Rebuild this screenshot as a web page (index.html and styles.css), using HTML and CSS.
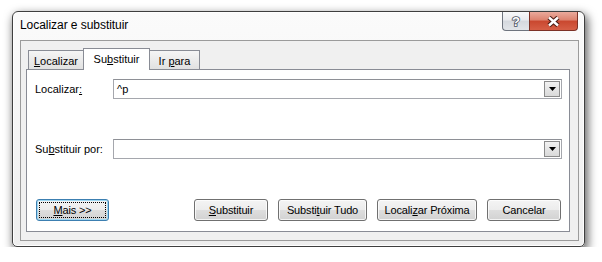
FILE: index.html
```html
<!DOCTYPE html>
<html lang="pt">
<head>
  <meta charset="UTF-8">
  <title>Localizar e substituir</title>
  <link rel="stylesheet" href="styles.css">
</head>
<body>

  <div class="window">
    <div class="titlebar">
      <span class="title">Localizar e substituir</span>
      <div class="caption-buttons">
        <div class="cap-btn help">
          <svg width="12" height="14" viewBox="0 0 12 14">
            <text x="6" y="12" text-anchor="middle" font-family="Liberation Sans, sans-serif" font-weight="bold" font-size="13" fill="#fff" stroke="#4a5261" stroke-width="1.6" paint-order="stroke">?</text>
          </svg>
        </div>
        <div class="cap-btn close">
          <svg width="15" height="11" viewBox="0 0 15 11">
            <path d="M3 1.5 L12 9.5 M12 1.5 L3 9.5" stroke="#4b1c14" stroke-width="4.6" fill="none"/>
            <path d="M3 1.5 L12 9.5 M12 1.5 L3 9.5" stroke="#fff" stroke-width="2.4" fill="none"/>
          </svg>
        </div>
      </div>
    </div>

    <div class="client">
      <div class="tabs">
        <div class="tab tab-find"><u>L</u>ocalizar</div>
        <div class="tab tab-replace active">Su<u>b</u>stituir</div>
        <div class="tab tab-goto">Ir <u>p</u>ara</div>
      </div>

      <div class="panel">
        <div class="field">
          <label>Localizar<u>:</u></label>
          <div class="combo">
            <span class="combo-text">^p</span>
            <span class="combo-arrow">
              <svg width="7" height="4" viewBox="0 0 7 4"><polygon points="0,0 7,0 3.5,4" fill="#000"/></svg>
            </span>
          </div>
        </div>

        <div class="field">
          <label>Su<u>b</u>stituir por:</label>
          <div class="combo">
            <span class="combo-text"></span>
            <span class="combo-arrow">
              <svg width="7" height="4" viewBox="0 0 7 4"><polygon points="0,0 7,0 3.5,4" fill="#000"/></svg>
            </span>
          </div>
        </div>

        <div class="buttons">
          <button class="btn btn-more"><span class="focus-rect"><u>M</u>ais &gt;&gt;</span></button>
          <div class="actions">
            <button class="btn btn-replace"><u>S</u>ubstituir</button>
            <button class="btn btn-replace-all">Substi<u>t</u>uir Tudo</button>
            <button class="btn btn-next">Locali<u>z</u>ar Próxima</button>
            <button class="btn btn-cancel">Cancelar</button>
          </div>
        </div>
      </div>
    </div>
  </div>

</body>
</html>
```

FILE: styles.css
```css
* {
  box-sizing: border-box;
}

body {
  margin: 0;
  padding: 11px 0 0 12px;
  background-color: #fff;
  font-family: "Liberation Sans", Arial, sans-serif;
  font-size: 11px;
  color: #000;
}

u {
  text-decoration: underline;
  text-underline-offset: 1px;
}

/* window frame */

.window {
  width: 573px;
  height: 236px;
  display: flex;
  flex-direction: column;
  border: 1px solid #3f3f3f;
  border-radius: 6px 6px 5px 5px;
  background: linear-gradient(#fbfbfb, #eeeeee);
  box-shadow: inset 0 0 0 1px rgba(255, 255, 255, 0.9), 2px 4px 10px 1px rgba(0, 0, 0, 0.6);
}

.titlebar {
  height: 28px;
  flex-shrink: 0;
  display: flex;
  justify-content: space-between;
  align-items: flex-start;
}

.title {
  padding: 6px 0 0 7px;
  font-size: 12px;
  line-height: 15px;
  letter-spacing: -0.05px;
}

.caption-buttons {
  display: flex;
  margin-right: 6px;
}

.cap-btn {
  height: 19px;
  display: flex;
  align-items: center;
  justify-content: center;
  border: 1px solid #6e747e;
  border-top: none;
}

.help {
  width: 27px;
  border-right: none;
  border-radius: 0 0 0 4px;
  background: linear-gradient(#f8f9fa 0%, #e8eaee 45%, #d4d8de 50%, #e2e5e9 100%);
}

.close {
  width: 49px;
  border-color: #7c3126;
  border-radius: 0 0 4px 0;
  background: linear-gradient(#eaaa9c 0%, #dd826e 45%, #c9472f 50%, #d65f46 100%);
}

/* client area */

.client {
  flex: 1;
  margin: 0 5px 5px 7px;
  border: 1px solid #9b9b9b;
  background-color: #f0f0f0;
  padding: 7px 8px 8px 5px;
  display: flex;
  flex-direction: column;
}

.tabs {
  height: 21px;
  flex-shrink: 0;
  display: flex;
  align-items: flex-end;
  padding-left: 2px;
}

.tab {
  height: 19px;
  margin-left: -1px;
  border: 1px solid #898c95;
  border-bottom: none;
  background: linear-gradient(#f5f5f5, #e1e1e1);
  text-align: center;
  padding-top: 3px;
  line-height: 15px;
}

.tab:first-child {
  margin-left: 0;
}

.tab.active {
  height: 22px;
  margin-bottom: -1px;
  position: relative;
  z-index: 1;
  background: #fff;
}

.tab-find {
  width: 56px;
}

.tab-replace {
  width: 67px;
}

.tab-goto {
  width: 51px;
}

.panel {
  flex: 1;
  border: 1px solid #898c95;
  background-color: #fff;
  padding: 9px 7px 10px 8px;
  display: flex;
  flex-direction: column;
}

.field {
  height: 20px;
  display: flex;
  align-items: center;
}

.field + .field {
  margin-top: 40px;
}

.field label {
  width: 78px;
  flex-shrink: 0;
}

.combo {
  flex: 1;
  height: 20px;
  border: 1px solid #a5a7ad;
  border-top-color: #8e9096;
  padding: 1px;
  display: flex;
}

.combo-text {
  flex: 1;
  padding-left: 2px;
  line-height: 16px;
}

.combo-arrow {
  width: 16px;
  border: 1px solid #8b8b8b;
  background: linear-gradient(#f2f2f2, #d9d9d9);
  display: flex;
  align-items: center;
  justify-content: center;
}

/* buttons */

.buttons {
  margin-top: auto;
  display: flex;
}

.btn {
  height: 22px;
  padding: 0;
  border: 1px solid #707070;
  border-radius: 3px;
  background: linear-gradient(#f4f4f4 0%, #ececec 50%, #dedede 50%, #d2d2d2 100%);
  box-shadow: inset 0 0 0 1px rgba(255, 255, 255, 0.75);
  font: inherit;
  color: #000;
  line-height: 20px;
  letter-spacing: -0.15px;
}

.btn-more {
  width: 73px;
  margin-left: 1px;
  padding: 2px;
  border-color: #3c7fb1;
  box-shadow: inset 0 0 0 1px #9fd8f3;
}

.focus-rect {
  display: block;
  height: 100%;
  border: 1px dotted #000;
  line-height: 14px;
}

.actions {
  margin-left: auto;
  margin-right: 1px;
  display: flex;
  gap: 10px;
}

.btn-replace {
  width: 74px;
}

.btn-replace-all {
  width: 89px;
}

.btn-next {
  width: 100px;
}

.btn-cancel {
  width: 74px;
}
```
